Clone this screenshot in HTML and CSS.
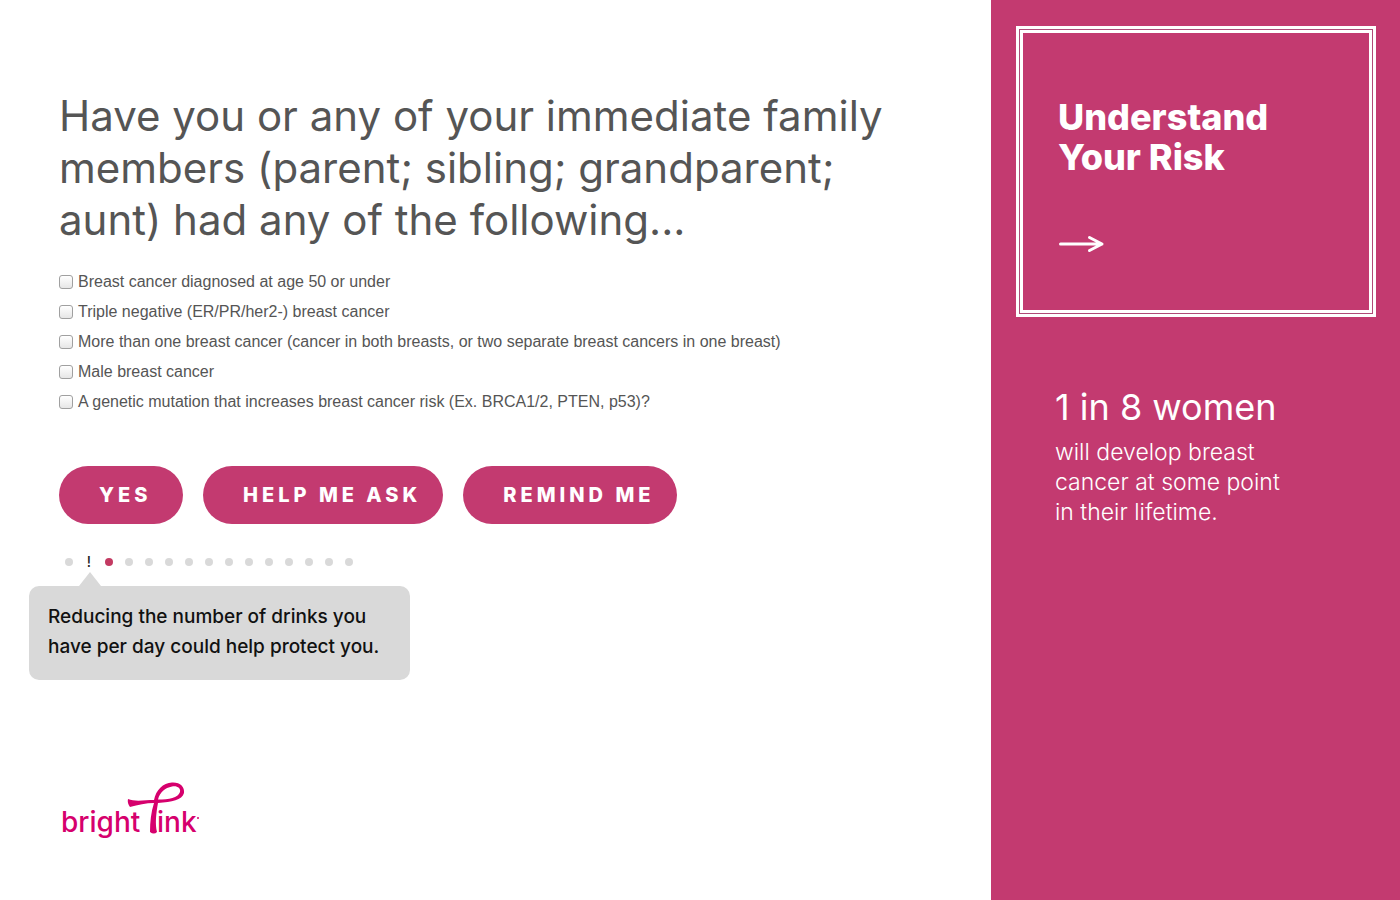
FILE: index.html
```html
<!DOCTYPE html>
<html lang="en">
<head>
<meta charset="utf-8">
<meta name="viewport" content="width=device-width, initial-scale=1">
<title>Bright Link</title>
<link rel="stylesheet" href="styles.css">
</head>
<body>
<div class="page">
  <main class="main">
    <form class="question">
      <h1 class="question-title">Have you or any of your immediate family members (parent; sibling; grandparent; aunt) had any of the following...</h1>
      <ul class="options">
        <li><label class="option"><input type="checkbox" class="box"><span>Breast cancer diagnosed at age 50 or under</span></label></li>
        <li><label class="option"><input type="checkbox" class="box"><span>Triple negative (ER/PR/her2-) breast cancer</span></label></li>
        <li><label class="option"><input type="checkbox" class="box"><span>More than one breast cancer (cancer in both breasts, or two separate breast cancers in one breast)</span></label></li>
        <li><label class="option"><input type="checkbox" class="box"><span>Male breast cancer</span></label></li>
        <li><label class="option"><input type="checkbox" class="box"><span>A genetic mutation that increases breast cancer risk (Ex. BRCA1/2, PTEN, p53)?</span></label></li>
      </ul>
      <div class="actions">
        <button type="button" class="pill">YES</button>
        <button type="button" class="pill">HELP ME ASK</button>
        <button type="button" class="pill">REMIND ME</button>
      </div>
    </form>
    <div class="progress">
      <ol class="dots">
        <li class="dot"></li>
        <li class="alert">!</li>
        <li class="dot current"></li>
        <li class="dot"></li>
        <li class="dot"></li>
        <li class="dot"></li>
        <li class="dot"></li>
        <li class="dot"></li>
        <li class="dot"></li>
        <li class="dot"></li>
        <li class="dot"></li>
        <li class="dot"></li>
        <li class="dot"></li>
        <li class="dot"></li>
        <li class="dot"></li>
      </ol>
      <p class="tip" role="note">Reducing the number of drinks you have per day could help protect you.</p>
    </div>
    <svg class="logo" width="144" height="62" viewBox="0 0 144 62" role="img" aria-label="bright link">
      <g class="logo-text">
        <text x="2" y="52">bright</text>
        <text x="98" y="52">ink</text>
      </g>
      <circle cx="139" cy="38" r="1" fill="#d6006d"/>
      <path fill="#d6006d" fill-rule="evenodd" d="M69 19 C76 22 86 20 95 20 C97 10 104 3 113 2.500 C121 2 126 7 125 13 C123 20 113 22 99 23 C97 34 96 44 98 52 Q95 55 91 52 C91 42 92 32 95 23 C87 23 79 25 71 27 Q68 23 69 19 Z M99 19.500 C110 19.500 119 18 121 12 C122 8 118 5.500 113 6.500 C106 8 101 12 99 19.500 Z"/>
    </svg>
  </main>
  <aside class="side">
    <a class="card" href="#risk">
      <span class="card-title">Understand Your Risk</span>
      <svg class="arrow" width="48" height="20" viewBox="0 0 48 20" aria-hidden="true">
        <path d="M2.500 10H44M31.500 3.500 44 10 31.500 16.500" fill="none" stroke="#fff" stroke-width="3" stroke-linecap="round" stroke-linejoin="round"/>
      </svg>
    </a>
    <section class="fact">
      <h2 class="fact-title">1 in 8 women</h2>
      <p class="fact-text">will develop breast cancer at some point in their lifetime.</p>
    </section>
  </aside>
</div>
</body>
</html>
```
FILE: styles.css
```css
* {
  box-sizing: border-box;
}

body {
  margin: 0;
  background: #fff;
  color: #555;
  font-family: Inter, "Liberation Sans", sans-serif;
}

h1, h2, p, ul, ol {
  margin: 0;
  padding: 0;
}

ul, ol {
  list-style: none;
}

.page {
  display: grid;
  grid-template-columns: minmax(0, 1fr) 409px;
  min-height: 100vh;
}

.main {
  display: flex;
  flex-direction: column;
  align-items: flex-start;
  padding: 90px 60px 58px 59px;
}

.question-title {
  max-width: 860px;
  font-size: 42px;
  font-weight: 400;
  line-height: 52px;
}

.options {
  margin-top: 21px;
  font-family: "Liberation Sans", sans-serif;
  font-size: 16px;
  line-height: 30px;
}

.option {
  display: flex;
  align-items: center;
  gap: 5px;
}

.box {
  appearance: none;
  flex: none;
  width: 14px;
  height: 14px;
  margin: 0;
  border: 1px solid #a0a0a0;
  border-radius: 3px;
  background: linear-gradient(#fff, #e6e6e6);
}

.box:checked {
  background: #c33a70;
}

.actions {
  display: flex;
  flex-wrap: wrap;
  gap: 20px;
  margin-top: 49px;
}

.pill {
  min-width: 124px;
  height: 58px;
  padding: 0 22px 0 40px;
  border: 0;
  border-radius: 29px;
  background: #c33a70;
  color: #fff;
  font: 800 20px/58px Inter, "Liberation Sans", sans-serif;
  letter-spacing: 4px;
  text-align: left;
  cursor: pointer;
}

.progress {
  position: relative;
  margin-top: 28px;
}

.dots {
  display: flex;
}

.dots li {
  display: flex;
  justify-content: center;
  align-items: center;
  width: 20px;
  height: 20px;
}

.dot::before {
  content: "";
  width: 8px;
  height: 8px;
  border-radius: 50%;
  background: #d9d9d9;
}

.current::before {
  background: #c33a62;
}

.alert {
  color: #222;
  font-size: 14px;
  font-weight: 500;
  line-height: 18px;
}

.tip {
  position: absolute;
  top: 34px;
  left: -30px;
  width: 381px;
  padding: 16px 19px 18px;
  border-radius: 10px;
  background: #d9d9d9;
  color: #111;
  font-size: 19px;
  font-weight: 500;
  line-height: 30px;
}

.tip::before {
  content: "";
  position: absolute;
  bottom: 100%;
  left: 50px;
  border: 11px solid transparent;
  border-top: 0;
  border-bottom: 14px solid #d9d9d9;
}

.logo {
  margin-top: auto;
}

.logo-text {
  fill: #d6006d;
  font-size: 28px;
  font-weight: 500;
}

.side {
  padding: 26px 24px 26px 25px;
  background: #c33a70;
  color: #fff;
}

.card {
  display: block;
  padding: 68px 60px 60px 39px;
  border: 3px solid #fff;
  box-shadow: inset 0 0 0 1px #b04a78, inset 0 0 0 4px #fff;
  color: #fff;
  text-decoration: none;
}

.card-title {
  display: block;
  max-width: 240px;
  font-size: 36px;
  font-weight: 800;
  line-height: 40px;
}

.arrow {
  display: block;
  margin-top: 57px;
}

.fact {
  max-width: 280px;
  padding: 65px 0 0 39px;
}

.fact-title {
  font-size: 36px;
  font-weight: 400;
  line-height: 50px;
}

.fact-text {
  margin-top: 5px;
  font-size: 23px;
  font-weight: 300;
  line-height: 30px;
}
```
